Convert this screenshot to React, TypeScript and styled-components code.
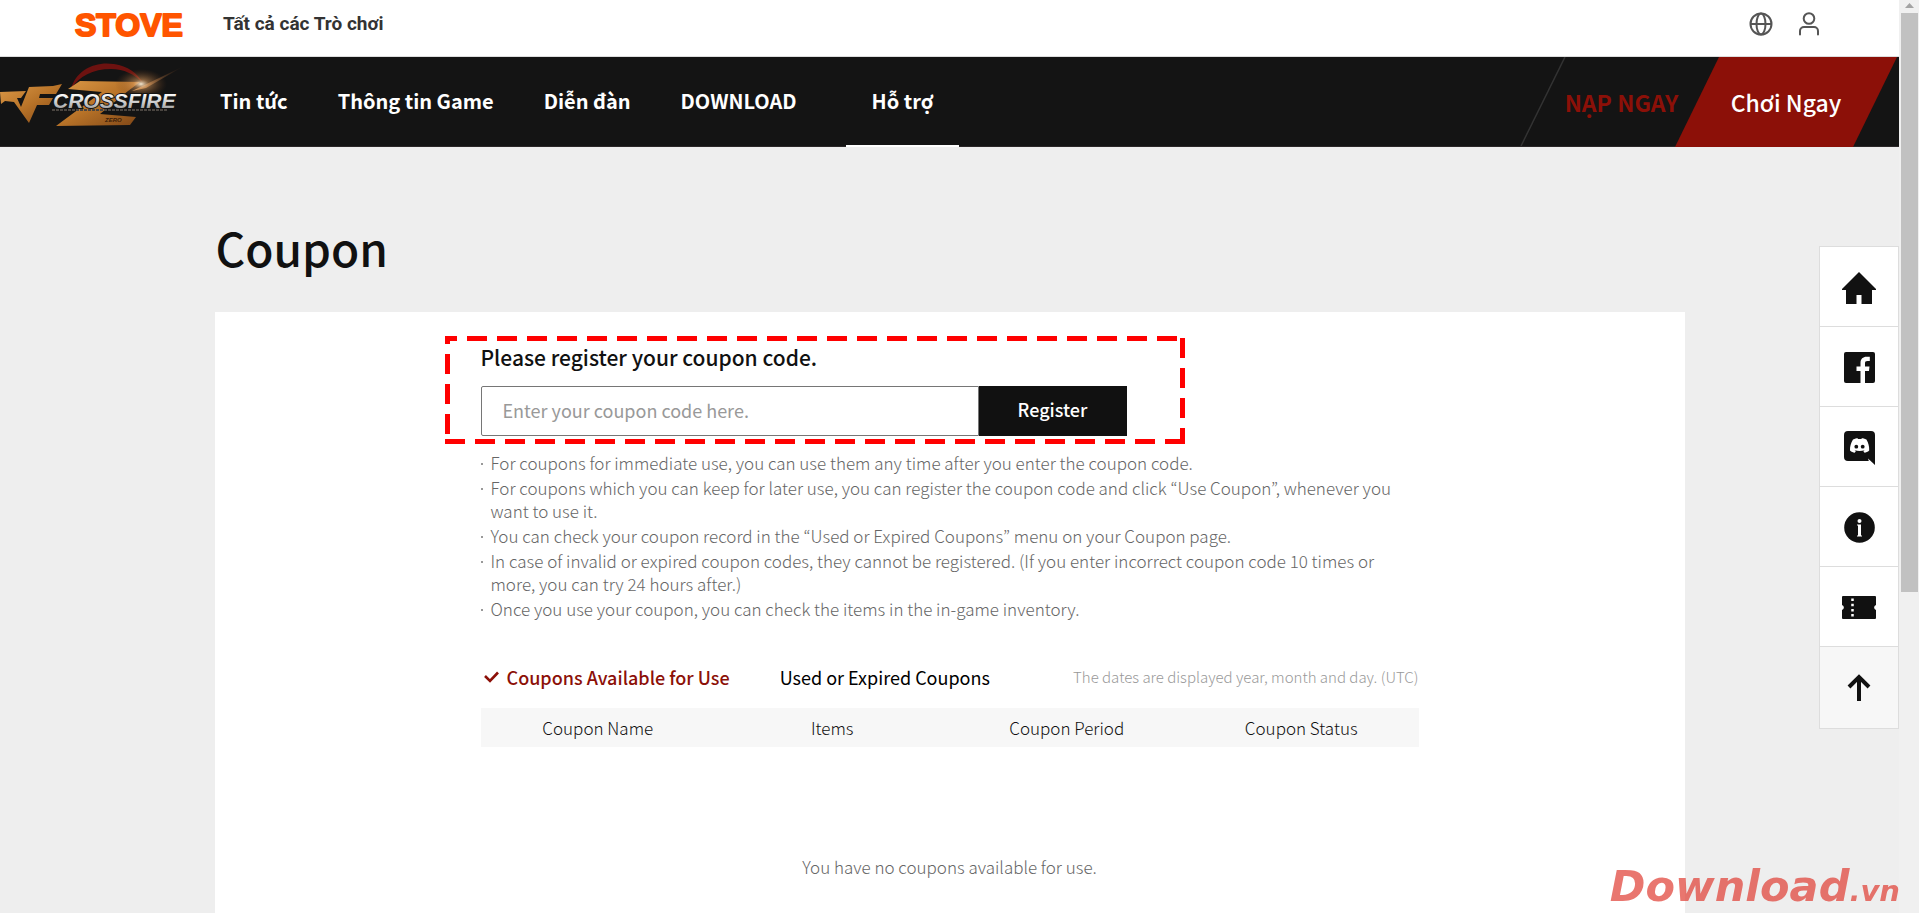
import React from "react";
import styled, { createGlobalStyle } from "styled-components";

const sans = `"Noto Sans CJK KR", "Noto Sans", sans-serif`;

const GlobalStyle = createGlobalStyle`
  *, *::before, *::after { box-sizing: border-box; }
  html, body { margin: 0; padding: 0; }
  body { background: #eeeeee; font-family: ${sans}; color: #111111; overflow: hidden; }
  button, input { font-family: inherit; }
  a { color: inherit; text-decoration: none; }
  ul { list-style: none; margin: 0; padding: 0; }
  h1, h2, p { margin: 0; }
`;

const Page = styled.div`
  display: flex;
  flex-direction: column;
  height: 100vh;
  margin-right: 20px;
  overflow: hidden;
`;

const TopBar = styled.header`
  flex: none;
  display: flex;
  align-items: center;
  justify-content: space-between;
  height: 57px;
  padding: 0 78px 8px 74px;
  background: #ffffff;
  border-bottom: 1px solid #dddddd;
`;

const TopGroup = styled.div<{ $gap: number }>`
  display: flex;
  align-items: center;
  gap: ${(p) => p.$gap}px;
`;

const StoveLink = styled.a`
  display: flex;
`;

const GamesLink = styled.a`
  font: 700 19px/24px Roboto, "Liberation Sans", sans-serif;
  color: #333333;
`;

const IconButton = styled.button`
  display: flex;
  padding: 0;
  border: 0;
  background: none;
  cursor: pointer;
`;

const NavBar = styled.nav`
  flex: none;
  display: flex;
  height: 90px;
  background: #141414;
  border-bottom: 1px solid #2b2728;
`;

const BrandLink = styled.a`
  flex: none;
  display: block;
  width: 195px;
`;

const NavList = styled.ul`
  display: flex;
  flex: 1;
  li:last-child { margin-left: 24px; }
`;

const NavLink = styled.a<{ $active?: boolean }>`
  display: block;
  height: 90px;
  padding: 0 ${(p) => (p.$active ? 26 : 25)}px;
  font-size: 20px;
  font-weight: 700;
  line-height: 88px;
  color: #ffffff;
  white-space: nowrap;
  border-bottom: ${(p) => (p.$active ? "2px solid #ffffff" : "0")};
`;

const Actions = styled.div`
  display: flex;
  padding-right: 2px;
`;

const ActionLink = styled.a<{ $primary?: boolean }>`
  position: relative;
  height: 90px;
  width: ${(p) => (p.$primary ? 222 : 200)}px;
  margin-left: ${(p) => (p.$primary ? -45 : 0)}px;
  padding-left: ${(p) => (p.$primary ? 0 : 3)}px;
  text-align: center;
  font-size: 23px;
  font-weight: ${(p) => (p.$primary ? 500 : 700)};
  line-height: 90px;
  color: ${(p) => (p.$primary ? "#ffffff" : "#8c1008")};
  background: ${(p) => (p.$primary ? "#8c1008" : "none")};
  clip-path: ${(p) => (p.$primary ? "polygon(44px 0, 100% 0, 178px 100%, 0 100%)" : "none")};
`;

const Slash = styled.svg`
  position: absolute;
  left: 0;
  top: 0;
`;

const Main = styled.main`
  width: calc(100% - 429px);
  margin: 0 auto;
  padding-top: 66px;
`;

const Title = styled.h1`
  padding-left: 1px;
  font-size: 46px;
  font-weight: 500;
  line-height: 68px;
  margin-bottom: 31px;
`;

const Card = styled.div`
  display: flex;
  justify-content: center;
  min-height: 700px;
  padding-top: 32px;
  background: #ffffff;
`;

const Content = styled.div`
  width: 938px;
`;

const Register = styled.form`
  position: relative;
`;

const Heading = styled.label`
  display: block;
  font-size: 21px;
  font-weight: 500;
  line-height: 26px;
  margin-bottom: 16px;
`;

const FieldRow = styled.div`
  display: flex;
`;

const CodeInput = styled.input`
  width: 498px;
  height: 50px;
  padding: 0 21px 2px;
  border: 1px solid #767676;
  border-radius: 2px 0 0 2px;
  background: #ffffff;
  font-size: 18px;
  outline: 0;
  &::placeholder { color: #999999; opacity: 1; }
`;

const RegisterButton = styled.button`
  width: 148px;
  height: 50px;
  padding: 0 0 4px;
  border: 0;
  background: #111111;
  color: #ffffff;
  font-size: 18px;
  font-weight: 500;
`;

const Marker = styled.svg`
  position: absolute;
  left: -36px;
  top: -8px;
  pointer-events: none;
`;

const Notes = styled.ul`
  display: flex;
  flex-direction: column;
  gap: 2px;
  margin-top: 15px;
`;

const Note = styled.li`
  display: flex;
  gap: 8px;
  font-size: 17px;
  font-weight: 300;
  line-height: 23px;
  color: #666666;
  &::before {
    content: "";
    flex: none;
    width: 2px;
    height: 2px;
    margin-top: 12px;
    background: #999999;
  }
`;

const Tabs = styled.div`
  display: flex;
  align-items: center;
  gap: 50px;
  margin: 44px 0 18px;
`;

const Tab = styled.button<{ $active?: boolean }>`
  display: flex;
  align-items: center;
  gap: 8px;
  padding: 0 0 0 ${(p) => (p.$active ? 3 : 0)}px;
  border: 0;
  background: none;
  font-size: 18px;
  font-weight: ${(p) => (p.$active ? 500 : 400)};
  line-height: 26px;
  color: ${(p) => (p.$active ? "#8c1008" : "#000000")};
`;

const DateHint = styled.p`
  margin-left: auto;
  font-size: 15px;
  font-weight: 300;
  line-height: 24px;
  color: #999999;
`;

const CouponTable = styled.table`
  width: 100%;
  table-layout: fixed;
  border-collapse: collapse;
  th {
    height: 39px;
    padding: 0;
    background: #f7f7f7;
    font-size: 17px;
    font-weight: 300;
    line-height: 24px;
  }
  td {
    padding: 108px 0 0;
    text-align: center;
    font-size: 17px;
    font-weight: 300;
    line-height: 24px;
    color: #666666;
  }
`;

const QuickMenu = styled.ul`
  position: fixed;
  right: 20px;
  top: 246px;
  width: 80px;
  border: 1px solid #dddddd;
  background: #ffffff;
  li + li { border-top: 1px solid #dddddd; }
  li:last-child { padding-bottom: 2px; background: #f7f7f7; }
`;

const QuickLink = styled.a`
  display: flex;
  align-items: center;
  justify-content: center;
  height: 79px;
  padding-top: 2px;
`;

const ScrollTrack = styled.div`
  position: fixed;
  right: 0;
  top: 0;
  bottom: 0;
  width: 20px;
  padding: 0 1px 0 2px;
  background: #f0f0f0;
`;

const ScrollArrow = styled.div`
  height: 13px;
  padding: 1px 0 0 4px;
  line-height: 0;
`;

const ScrollThumb = styled.div`
  height: 579px;
  background: #c1c1c1;
`;

const Watermark = styled.div`
  position: fixed;
  right: 19px;
  bottom: -6px;
  font: italic 700 43px/56px "DejaVu Sans", sans-serif;
  color: #e03c32;
  opacity: 0.7;
  span { font-size: 29px; }
`;

const StoveLogo = () => (
  <svg width="116" height="44" viewBox="0 0 116 44" aria-label="Stove">
    <text
      x="1"
      y="34"
      fontFamily="Liberation Sans, sans-serif"
      fontWeight="700"
      fontSize="32"
      fill="#ff5500"
      stroke="#ff5500"
      strokeWidth="2"
      strokeLinejoin="round"
    >
      STOVE
    </text>
  </svg>
);

const CrossfireLogo = () => (
  <svg width="194" height="89" viewBox="0 0 194 89" aria-label="Crossfire">
    <defs>
      <linearGradient id="gold" x1="0" y1="0" x2="1" y2="1">
        <stop offset="0" stopColor="#dd9a48" />
        <stop offset="0.5" stopColor="#b87328" />
        <stop offset="1" stopColor="#7e4516" />
      </linearGradient>
      <linearGradient id="steel" x1="0" y1="0" x2="0" y2="1">
        <stop offset="0.2" stopColor="#ffffff" />
        <stop offset="0.75" stopColor="#b5b5b5" />
        <stop offset="1" stopColor="#777777" />
      </linearGradient>
      <radialGradient id="flare">
        <stop offset="0" stopColor="#fff3dc" stopOpacity="0.95" />
        <stop offset="0.3" stopColor="#d99a5c" stopOpacity="0.55" />
        <stop offset="1" stopColor="#6a3a18" stopOpacity="0" />
      </radialGradient>
      <linearGradient id="ray" x1="0" y1="1" x2="1" y2="0">
        <stop offset="0" stopColor="#f0b070" />
        <stop offset="1" stopColor="#5a2c10" stopOpacity="0" />
      </linearGradient>
    </defs>
    <path d="M71 32C76 13 95 4 114 7c14 2 23 9 29 19-9-9-19-14-32-14-18 0-32 7-40 20z" fill="#6d1210" />
    <path d="M80 24l60 1-12 9-28 23 36 3-6 8-74 1 8-6 38-28-34-3z" fill="url(#gold)" />
    <path d="M132 34L184 9l-38 22z" fill="url(#ray)" />
    <ellipse cx="141" cy="27" rx="26" ry="15" fill="url(#flare)" />
    <path d="M0 35l26-1-5 7h-4l4 9 8-20 24-1 9-2-6 10H40l-1 4h14l-4 7H37L29 66 14 45l-9-1-4 3z" fill="url(#gold)" />
    <text
      x="53"
      y="51"
      fontFamily="Liberation Sans, sans-serif"
      fontStyle="italic"
      fontWeight="700"
      fontSize="21"
      fill="url(#steel)"
      stroke="#141414"
      strokeWidth="2"
      paintOrder="stroke"
    >
      CROSSFIRE
    </text>
    <path d="M52 53h116" stroke="#4a4540" strokeWidth="2" strokeDasharray="3 1" />
    <text x="105" y="65" fontFamily="Liberation Sans, sans-serif" fontStyle="italic" fontWeight="700" fontSize="6" fill="#3b1d08">
      ZERO
    </text>
  </svg>
);

const GlobeIcon = () => (
  <svg width="24" height="24" viewBox="0 0 24 24" fill="none" stroke="#555555" strokeWidth="2">
    <circle cx="12" cy="12" r="10.5" />
    <ellipse cx="12" cy="12" rx="4.5" ry="10.5" />
    <path d="M1.500 12h21" />
  </svg>
);

const UserIcon = () => (
  <svg width="24" height="24" viewBox="0 0 24 24" fill="none" stroke="#555555" strokeWidth="2" strokeLinecap="round">
    <circle cx="12" cy="6.500" r="5.300" />
    <path d="M3 22.500v-3.500a4 4 0 0 1 4-4h10a4 4 0 0 1 4 4v3.500" />
  </svg>
);

const HomeIcon = () => (
  <svg width="34" height="32" viewBox="0 0 34 32">
    <path d="M17 0L34 17v1h-4v14h-10.500v-9h-5v9H4V18H0v-1z" fill="#111111" />
  </svg>
);

const FacebookIcon = () => (
  <svg width="31" height="31" viewBox="0 0 31 31">
    <rect width="31" height="31" rx="2" fill="#111111" />
    <path d="M16.500 31V19H12.500v-4.500h4V11c0-4 2.500-6.200 6-6.200h3.300v4.300h-2.300c-2 0-2.500.8-2.500 2.400v3H25.500L25 19h-4v12z" fill="#ffffff" />
  </svg>
);

const DiscordIcon = () => (
  <svg width="31" height="34" viewBox="0 0 31 34">
    <path d="M4 0h23a4 4 0 0 1 4 4v30l-7-6.500.8 2.500H4a4 4 0 0 1-4-4V4a4 4 0 0 1 4-4z" fill="#111111" />
    <path d="M9 8.500c2-1 3.500-1.300 4.500-1.300l.6.9h3.200l.6-.9c1 0 2.600.4 4.500 1.300 2 3.300 3 7 2.800 11-1.500 1.500-3.200 2-4.700 2.200l-1.200-1.800 1.500-.9c-3.300 1.400-7 1.400-10.400 0l1.500.9-1.200 1.800c-1.500-.2-3.200-.7-4.700-2.200C5.800 15.500 7 11.800 9 8.500z" fill="#ffffff" />
    <circle cx="12.300" cy="15.700" r="1.900" fill="#111111" />
    <circle cx="18.700" cy="15.700" r="1.900" fill="#111111" />
  </svg>
);

const InfoIcon = () => (
  <svg width="31" height="31" viewBox="0 0 31 31">
    <circle cx="15.500" cy="15.500" r="15.300" fill="#111111" />
    <circle cx="15.500" cy="9" r="2" fill="#ffffff" />
    <path d="M13 12.500h4v11h1V24.500h-5v-1h1v-10h-1z" fill="#ffffff" />
  </svg>
);

const TicketIcon = () => (
  <svg width="34" height="23" viewBox="0 0 34 23">
    <path d="M1 0h32a1 1 0 0 1 1 1v8a2.600 2.600 0 0 0 0 5v8a1 1 0 0 1-1 1H1a1 1 0 0 1-1-1v-8a2.600 2.600 0 0 0 0-5V1a1 1 0 0 1 1-1z" fill="#111111" />
    <path d="M10.500 2.500v19" stroke="#ffffff" strokeWidth="2.500" strokeDasharray="2.500 2.700" />
  </svg>
);

const ArrowUpIcon = () => (
  <svg width="24" height="27" viewBox="0 0 24 27" fill="none" stroke="#111111" strokeWidth="4">
    <path d="M12 27V3M2 13L12 3l10 10" />
  </svg>
);

const CheckIcon = () => (
  <svg width="15" height="12" viewBox="0 0 15 12" fill="none" stroke="#8c1008" strokeWidth="2.600">
    <path d="M1 5l5 5 8-8.500" />
  </svg>
);

const navItems = ["Tin tức", "Thông tin Game", "Diễn đàn", "DOWNLOAD", "Hỗ trợ"];

const notes = [
  "For coupons for immediate use, you can use them any time after you enter the coupon code.",
  "For coupons which you can keep for later use, you can register the coupon code and click “Use Coupon”, whenever you want to use it.",
  "You can check your coupon record in the “Used or Expired Coupons” menu on your Coupon page.",
  "In case of invalid or expired coupon codes, they cannot be registered. (If you enter incorrect coupon code 10 times or more, you can try 24 hours after.)",
  "Once you use your coupon, you can check the items in the in-game inventory.",
];

const quickItems = [
  { label: "Home", Icon: HomeIcon },
  { label: "Facebook", Icon: FacebookIcon },
  { label: "Discord", Icon: DiscordIcon },
  { label: "Information", Icon: InfoIcon },
  { label: "Coupon", Icon: TicketIcon },
  { label: "Back to top", Icon: ArrowUpIcon },
];

export default function App() {
  return (
    <>
      <GlobalStyle />
      <Page>
        <TopBar>
          <TopGroup $gap={33}>
            <StoveLink href="#stove"><StoveLogo /></StoveLink>
            <GamesLink href="#games">Tất cả các Trò chơi</GamesLink>
          </TopGroup>
          <TopGroup $gap={24}>
            <IconButton aria-label="Language"><GlobeIcon /></IconButton>
            <IconButton aria-label="Account"><UserIcon /></IconButton>
          </TopGroup>
        </TopBar>
        <NavBar>
          <BrandLink href="#home"><CrossfireLogo /></BrandLink>
          <NavList>
            {navItems.map((item) => (
              <li key={item}>
                <NavLink href="#nav" $active={item === "Hỗ trợ"}>{item}</NavLink>
              </li>
            ))}
          </NavList>
          <Actions>
            <ActionLink href="#topup">
              <Slash width="46" height="89" viewBox="0 0 46 89">
                <path d="M1 89L45 0" stroke="#333333" strokeWidth="1.500" />
              </Slash>
              NẠP NGAY
            </ActionLink>
            <ActionLink href="#play" $primary>Chơi Ngay</ActionLink>
          </Actions>
        </NavBar>
        <Main>
          <Title>Coupon</Title>
          <Card>
            <Content>
              <Register onSubmit={(e) => e.preventDefault()}>
                <Heading htmlFor="coupon-code">Please register your coupon code.</Heading>
                <FieldRow>
                  <CodeInput id="coupon-code" placeholder="Enter your coupon code here." />
                  <RegisterButton type="submit">Register</RegisterButton>
                </FieldRow>
                <Marker width="740" height="108" viewBox="0 0 740 108" stroke="#ff0000" strokeWidth="5" strokeDasharray="20 10">
                  <path d="M0 2.500H735" strokeDashoffset="8" />
                  <path d="M737.500 0V108" strokeDashoffset="-2" />
                  <path d="M0 105.500H740" />
                  <path d="M2.500 0V100" strokeDashoffset="12" />
                </Marker>
              </Register>
              <Notes>
                {notes.map((note) => (
                  <Note key={note}>{note}</Note>
                ))}
              </Notes>
              <Tabs>
                <Tab $active><CheckIcon />Coupons Available for Use</Tab>
                <Tab>Used or Expired Coupons</Tab>
                <DateHint>The dates are displayed year, month and day. (UTC)</DateHint>
              </Tabs>
              <CouponTable>
                <thead>
                  <tr>
                    <th>Coupon Name</th>
                    <th>Items</th>
                    <th>Coupon Period</th>
                    <th>Coupon Status</th>
                  </tr>
                </thead>
                <tbody>
                  <tr>
                    <td colSpan={4}>You have no coupons available for use.</td>
                  </tr>
                </tbody>
              </CouponTable>
            </Content>
          </Card>
        </Main>
      </Page>
      <QuickMenu>
        {quickItems.map(({ label, Icon }) => (
          <li key={label}>
            <QuickLink href="#quick" aria-label={label}><Icon /></QuickLink>
          </li>
        ))}
      </QuickMenu>
      <ScrollTrack>
        <ScrollArrow>
          <svg width="9" height="5" viewBox="0 0 9 5"><path d="M0 5L4.500 0 9 5z" fill="#a3a3a3" /></svg>
        </ScrollArrow>
        <ScrollThumb />
      </ScrollTrack>
      <Watermark>Download<span>.vn</span></Watermark>
    </>
  );
}
